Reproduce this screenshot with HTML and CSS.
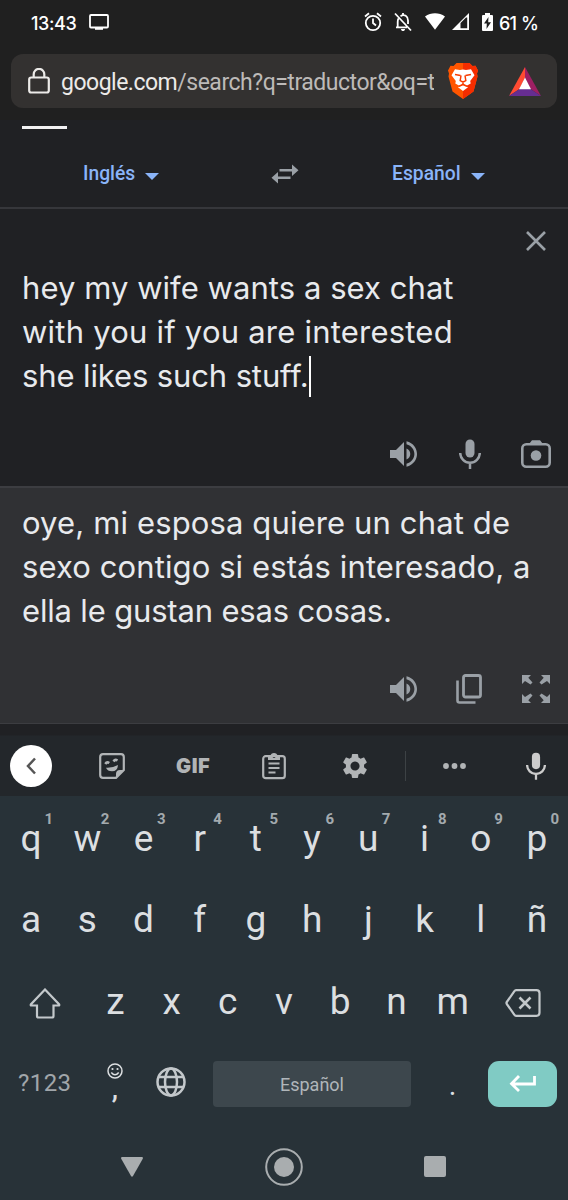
FILE: index.html
```html
<!DOCTYPE html>
<html lang="es">
<head>
    <meta charset="UTF-8">
    <meta name="viewport" content="width=device-width, initial-scale=1.0">
    <title>Traductor</title>
    <link rel="stylesheet" href="styles.css">
</head>
<body>
    <svg class="defs">
        <symbol id="speaker" viewBox="0 0 28 26">
            <path d="M0 9h6l8-8v24l-8-8H0z"/>
            <path d="M16.500 7.500c5 2 5 9 0 11z"/>
            <path d="M16.500 0.300v3c10.500 3 10.500 16.400 0 19.400v3c14-3.500 14-21.900 0-25.400z"/>
        </symbol>
        <symbol id="mic" viewBox="0 0 22 30">
            <rect x="6.500" y="0.500" width="9" height="18" rx="4.500"/>
            <path d="M1.200 14a9.800 9.800 0 0 0 19.600 0M11 23.500V30" fill="none" stroke="currentColor" stroke-width="2.500"/>
        </symbol>
    </svg>
    <div class="phone">
        <div class="status">
            <span class="time">13:43</span>
            <svg class="cast" width="20" height="17" viewBox="0 0 20 17"><rect x="1" y="1" width="18" height="12.500" rx="1" fill="none" stroke="currentColor" stroke-width="1.800"/><path d="M6 13h8v2.800H6z"/></svg>
            <div class="status-icons">
                <svg width="18" height="20" viewBox="0 0 18 20"><g fill="none" stroke="currentColor" stroke-width="1.800"><circle cx="9" cy="11" r="7.200"/><path d="M9 6.500V11l3 2.500M1 4.500L5 1.300M17 4.500L13 1.300"/></g></svg>
                <svg width="18" height="20" viewBox="0 0 18 20"><path d="M1 1.500l16 17M4.500 6.500c-.7 1-.8 2-.8 3.500v5M2 15.400h11M6.500 4.200c4-2.600 7.500.2 7.500 4.300v3.500M9 1v2.500" fill="none" stroke="currentColor" stroke-width="1.800"/><path d="M7 17h4c0 2.700-4 2.700-4 0z"/></svg>
                <svg width="20" height="20" viewBox="0 0 20 20"><path d="M0 4.500C6 .2 14 .2 20 4.500L10 17.800z"/></svg>
                <svg width="18" height="20" viewBox="0 0 18 20"><path fill-rule="evenodd" d="M0 18L17 1v17zM8.500 16.200h6.700V5.500H14L8.500 11z"/></svg>
                <svg width="11" height="20" viewBox="0 0 11 20"><path fill-rule="evenodd" d="M3 1h5v2h2q1 0 1 1v14q0 1-1 1H1q-1 0-1-1V4q0-1 1-1h2zM6.500 5L2 11.500h2.800L4.500 17 9 10.300H6.200z"/></svg>
                <span class="battery">61 %</span>
            </div>
        </div>

        <div class="browser">
            <div class="address">
                <svg class="lock" width="22" height="26" viewBox="0 0 22 26"><rect x="1.200" y="9.500" width="19.600" height="15" rx="2" fill="none" stroke="currentColor" stroke-width="2.200"/><path d="M5.700 9.500V6.200a5.300 5.300 0 0 1 10.600 0v3.300" fill="none" stroke="currentColor" stroke-width="2.200"/></svg>
                <div class="url">google.com<span>/search?q=traductor&amp;oq=t</span></div>
                <svg class="brave" width="30" height="36" viewBox="0 0 30 36">
                    <path fill="#ff5500" d="M8.500 0h13l3 3 3-.2 2.500 4.700-1 3 .5 3-4 15L15 36 4.500 28.500.5 13.500l.5-3-1-3 2.500-4.700 3 .2z"/>
                    <path fill="#f52d00" d="M15 0h6.500l3 3 3-.2 2.500 4.700-1 3 .5 3-4 15L15 36z"/>
                    <path fill="#fff" d="M7 6.300l5 .8 3-.6 3 .6 5-.8 3.500 6-4.300 5.700.5 2.500-4.500 2.500-3.200-2.600-3.200 2.600-4.500-2.500.5-2.500-4.300-5.700z"/>
                    <path fill="#fff" d="M10 24.300l5-2.500 5 2.500-5 3.700z"/>
                    <path d="M7 11.500l5.500 1M23 11.500l-5.500 1M13 12.500l-.8 5 2.800 1.700 2.800-1.700-.8-5M15 19v2.500l-4 1.700M15 21.500l4 1.700" fill="none" stroke="#f83b00" stroke-width="1.500"/>
                </svg>
                <svg class="bat" width="32" height="29" viewBox="0 0 32 29"><path fill="#ff4b32" d="M16 0v11L10.500 22 0 29z"/><path fill="#9e1f63" d="M16 0l16 29-10.500-7L16 11z"/><path fill="#662d91" d="M0 29l10.500-7h11L32 29z"/><path fill="#fff" d="M16 10.500L22 22.300H10z"/></svg>
            </div>
        </div>

        <div class="tab-line"></div>
        <div class="languages">
            <div class="lang">Inglés<i></i></div>
            <svg class="swap" width="28" height="22" viewBox="0 0 28 22"><path d="M8.500 6h12.500V1.500l6.500 5.700L21 13V8.500H8.500zM19.500 16H7v4.500L.5 14.800 7 9v4.500h12.500z"/></svg>
            <div class="lang">Español<i></i></div>
        </div>

        <div class="source">
            <svg class="close" width="20" height="20" viewBox="0 0 20 20"><path d="M1 1l18 18M19 1L1 19" stroke="currentColor" stroke-width="2.600"/></svg>
            <div class="text">
                <p class="s1">hey my wife wants a sex chat</p>
                <p class="s2">with you if you are interested</p>
                <p class="s3">she likes such stuff.<b class="caret"></b></p>
            </div>
            <div class="actions">
                <svg width="28" height="26"><use href="#speaker"/></svg>
                <svg width="22" height="30"><use href="#mic"/></svg>
                <svg width="30" height="28" viewBox="0 0 30 28"><rect x="1.300" y="4.300" width="27.400" height="22.400" rx="4" fill="none" stroke="currentColor" stroke-width="2.600"/><path d="M8 4l3-3.700h8L22 4z"/><circle cx="15" cy="15.500" r="5.300"/></svg>
            </div>
        </div>

        <div class="result">
            <div class="text">
                <p class="r1">oye, mi esposa quiere un chat de</p>
                <p class="r2">sexo contigo si estás interesado, a</p>
                <p class="r3">ella le gustan esas cosas.</p>
            </div>
            <div class="actions">
                <svg width="28" height="26"><use href="#speaker"/></svg>
                <svg width="26" height="30" viewBox="0 0 26 30"><rect x="7.500" y="1.500" width="17" height="21.500" rx="2" fill="none" stroke="currentColor" stroke-width="2.800"/><path d="M1.500 6.500v20q0 2 2 2H19.500" fill="none" stroke="currentColor" stroke-width="2.600"/></svg>
                <svg width="28" height="28" viewBox="0 0 28 28"><path d="M0 0h9L6.300 2.700l4.200 4.800-2 2L3 6 0 9zM28 0v9l-3-3-5.500 3.500-2-2 4.200-4.800L19 0zM0 28v-9l3 3 5.500-3.500 2 2-4.200 4.800L9 28zM28 28h-9l2.700-2.700-4.200-4.800 2-2L25 22l3-3z"/></svg>
            </div>
        </div>

        <div class="toolbar">
            <span class="back"><svg width="10" height="18" viewBox="0 0 10 18"><path d="M9 1.500L2 9l7 7.500" fill="none" stroke="currentColor" stroke-width="2.500"/></svg></span>
            <svg class="sticker" width="26" height="26" viewBox="0 0 26 26"><path d="M4 1.200h18q2.800 0 2.800 2.800v13L17 24.800H4q-2.800 0-2.800-2.800V4q0-2.800 2.800-2.800z" fill="none" stroke="currentColor" stroke-width="2.200"/><path d="M17 25v-4q0-4 4-4h4zM7 14.800q6 .5 12-2.800-.5 6.300-6 6.300-4.500 0-6-3.500z"/><path d="M6.300 11q1.500-2.500 4-1M14.500 8.500q1.500-2.500 4-1" fill="none" stroke="currentColor" stroke-width="2.500"/></svg>
            <span class="gif">GIF</span>
            <svg class="clip" width="24" height="28" viewBox="0 0 24 28"><rect x="1.200" y="4.200" width="21.600" height="22" rx="2.500" fill="none" stroke="currentColor" stroke-width="2.200"/><path d="M6.500 11.500h11M6.500 16h11M6.500 20.500h7" stroke="currentColor" stroke-width="2"/><path fill-rule="evenodd" d="M6 8V4h2.300a3.800 3.800 0 0 1 7.400 0H18v4zM12 3.300a1.400 1.400 0 1 0 .1 0z"/></svg>
            <svg class="gear" width="26" height="26" viewBox="1.700 1.700 20.600 20.600"><path d="M19.140 12.940c.04-.3.060-.61.060-.94 0-.32-.02-.64-.07-.94l2.030-1.580c.18-.14.230-.41.120-.61l-1.920-3.320c-.12-.22-.37-.29-.59-.22l-2.390.96c-.5-.38-1.030-.7-1.620-.94l-.36-2.540c-.04-.24-.24-.41-.48-.41h-3.840c-.24 0-.43.17-.47.41l-.36 2.540c-.59.24-1.130.57-1.620.94l-2.390-.96c-.22-.08-.47 0-.59.22L2.740 8.870c-.12.210-.08.470.12.610l2.030 1.580c-.05.3-.09.630-.09.940s.02.640.07.940l-2.030 1.580c-.18.140-.23.410-.12.610l1.920 3.320c.12.220.37.290.59.220l2.390-.96c.5.380 1.030.7 1.620.94l.36 2.540c.05.240.24.410.48.410h3.840c.24 0 .44-.17.470-.41l.36-2.540c.59-.24 1.130-.56 1.620-.94l2.390.96c.22.080.47 0 .59-.22l1.920-3.320c.12-.22.070-.47-.12-.61l-2.010-1.580zM12 15.600c-1.980 0-3.600-1.620-3.600-3.600s1.620-3.600 3.600-3.600 3.600 1.620 3.600 3.600-1.620 3.600-3.600 3.600z"/></svg>
            <span class="divider"></span>
            <svg class="dots" width="24" height="6" viewBox="0 0 24 6"><circle cx="3" cy="3" r="2.900"/><circle cx="11.500" cy="3" r="2.900"/><circle cx="20" cy="3" r="2.900"/></svg>
            <svg class="voice" width="20" height="28"><use href="#mic"/></svg>
        </div>

        <div class="keyboard">
            <div class="keys">
                <span>q<sup>1</sup></span><span>w<sup>2</sup></span><span>e<sup>3</sup></span><span>r<sup>4</sup></span><span>t<sup>5</sup></span><span>y<sup>6</sup></span><span>u<sup>7</sup></span><span>i<sup>8</sup></span><span>o<sup>9</sup></span><span>p<sup>0</sup></span>
            </div>
            <div class="keys">
                <span>a</span><span>s</span><span>d</span><span>f</span><span>g</span><span>h</span><span>j</span><span>k</span><span>l</span><span>ñ</span>
            </div>
            <div class="keys last">
                <span class="wide"><svg width="32" height="31" viewBox="0 0 32 31"><path d="M16 1.500L30 16.200q.8 1.300-.6 1.300H24.500V28q0 1.500-1.500 1.500H9.500Q8 29.500 8 28V17.500H2.600Q1.200 17.500 2 16.200z" fill="none" stroke="currentColor" stroke-width="2.200"/></svg></span>
                <span>z</span><span>x</span><span>c</span><span>v</span><span>b</span><span>n</span><span>m</span>
                <span class="wide"><svg width="36" height="28" viewBox="0 0 36 28"><path d="M11 1.200h20.500q3 0 3 3v19.600q0 3-3 3H11q-1 0-1.600-1L1.800 15q-.7-1 0-2L9.400 2.200q.6-1 1.600-1z" fill="none" stroke="currentColor" stroke-width="2.200"/><path d="M14.500 8.500l11 11M25.500 8.500l-11 11" stroke="currentColor" stroke-width="2.600"/></svg></span>
            </div>
            <div class="bottom-row">
                <span class="symbols">?123</span>
                <span class="comma"><svg width="16" height="16" viewBox="0 0 16 16"><circle cx="8" cy="8" r="7" fill="none" stroke="currentColor" stroke-width="1.500"/><circle cx="5.500" cy="6" r="1.100"/><circle cx="10.500" cy="6" r="1.100"/><path d="M4.300 9.500q3.700 4.500 7.400 0" fill="none" stroke="currentColor" stroke-width="1.500"/></svg><em>,</em></span>
                <svg class="globe" width="30" height="30" viewBox="0 0 30 30"><g fill="none" stroke="currentColor" stroke-width="2.500"><circle cx="15" cy="15" r="13.500"/><ellipse cx="15" cy="15" rx="6" ry="13.500"/><path d="M3 10h24M3 20h24"/></g></svg>
                <span class="space">Español</span>
                <span class="period">.</span>
                <span class="enter"><svg width="27" height="17" viewBox="0 0 27 17"><path d="M25.500 1v8H3M10 1L2.500 8.800 10 16" fill="none" stroke="currentColor" stroke-width="2.800"/></svg></span>
            </div>
            <div class="nav">
                <svg width="24" height="22" viewBox="0 0 24 22"><path d="M2 1h20q1.500.2.800 1.700L13 20q-1 1.500-2 0L1.200 2.700Q.5 1.200 2 1z"/></svg>
                <svg width="38" height="38" viewBox="0 0 38 38"><circle cx="19" cy="19" r="17.800" fill="none" stroke="currentColor" stroke-width="2"/><circle cx="19" cy="19" r="10"/></svg>
                <i></i>
            </div>
        </div>
    </div>
</body>
</html>
```

FILE: styles.css
```css
* {
    box-sizing: border-box;
}
body {
    margin: 0;
    background: #202124;
    font-family: Roboto, "Liberation Sans", sans-serif;
}
p {
    margin: 0;
}
svg {
    display: block;
    flex: none;
    fill: currentColor;
}
.defs {
    display: none;
}
.phone {
    width: 568px;
    height: 1200px;
    overflow: hidden;
    display: flex;
    flex-direction: column;
}

/* status bar */
.status {
    height: 54px;
    padding: 0 31px 9px 31px;
    display: flex;
    align-items: center;
    background: #202020;
    color: #fff;
    font-family: Inter, sans-serif;
    font-weight: 500;
    font-size: 18px;
}
.time {
    width: 58px;
    padding-top: 2px;
    letter-spacing: -0.4px;
}
.cast {
    margin-top: -1px;
}
.status-icons {
    margin-left: auto;
    display: flex;
    align-items: center;
}
.status-icons svg {
    margin: -2px 12px 0 0;
}
.status-icons svg:nth-child(2) {
    margin-right: 13px;
}
.status-icons svg:nth-child(3) {
    margin-right: 7px;
}
.status-icons svg:nth-child(5) {
    margin-right: 6px;
}
.battery {
    width: 38px;
    padding-top: 2px;
    white-space: nowrap;
    letter-spacing: -0.9px;
    word-spacing: 1px;
}

/* address bar */
.browser {
    height: 66px;
    padding: 0 11px;
    background: #202020;
}
.address {
    height: 54px;
    padding: 0 16px 0 17px;
    display: flex;
    align-items: center;
    border-radius: 12px;
    background: #333130;
    color: #eceae8;
}
.lock {
    margin-right: 11px;
}
.url {
    width: 373px;
    overflow: hidden;
    white-space: nowrap;
    font-size: 23px;
    letter-spacing: -0.5px;
    line-height: 34px;
    padding-top: 4px;
}
.url span {
    color: #bdbab8;
    letter-spacing: -0.48px;
}
.brave {
    margin-left: 14px;
}
.bat {
    margin-left: auto;
}

/* language picker */
.tab-line {
    width: 45px;
    height: 3px;
    margin: 6px 0 0 22px;
    background: #f1f1f3;
}
.languages {
    height: 80px;
    padding: 11px 83px 0;
    display: flex;
    align-items: center;
    border-bottom: 2px solid #36373b;
    color: #9aa0a6;
}
.swap {
    margin: 0 auto 0 112px;
}
.lang {
    width: 93px;
    display: flex;
    align-items: center;
    justify-content: space-between;
    flex: none;
    color: #8ab4f8;
    font-size: 19.3px;
    font-weight: 500;
}
.lang:first-child {
    width: 76px;
}
.lang i {
    margin-top: 5px;
    border: 7px solid transparent;
    border-top-color: #8ab4f8;
    border-bottom: 0;
}

/* translation */
.text {
    color: #e8eaed;
    font-family: Inter, sans-serif;
    font-size: 31px;
    line-height: 44px;
    white-space: nowrap;
}
.s1 {
    letter-spacing: 0.05px;
}
.s2 {
    letter-spacing: 0.22px;
}
.s3 {
    letter-spacing: -0.12px;
}
.r1 {
    letter-spacing: 0.13px;
}
.r2 {
    letter-spacing: 0.1px;
}
.r3 {
    letter-spacing: -0.17px;
}
.source {
    height: 277px;
    padding: 22px 17px 17px 22px;
    display: flex;
    flex-direction: column;
}
.close {
    align-self: flex-end;
    margin: 0 5px 15px 0;
    color: #9aa0a6;
}
.source .text {
    flex: 1;
}
.caret {
    display: inline-block;
    width: 2px;
    height: 41px;
    vertical-align: 2px;
    margin: -12px 0 -12px;
    background: #fff;
}
.actions {
    height: 30px;
    display: flex;
    align-items: center;
    justify-content: flex-end;
    gap: 40px;
    color: #9aa0a6;
}
.source .actions svg:first-child {
    margin-right: 1px;
}
.result {
    height: 238px;
    padding: 13px 18px 19px 22px;
    display: flex;
    flex-direction: column;
    border-top: 2px solid #3c3d41;
    border-bottom: 1px solid #3c3d41;
    background: #303134;
}
.result .text {
    flex: 1;
}
.result .actions {
    gap: 40px;
}
.result .actions svg:first-child {
    margin-right: -2px;
}

/* keyboard toolbar */
.toolbar {
    height: 72px;
    margin-top: auto;
    padding: 11px 22px 0 10px;
    display: flex;
    align-items: center;
    background: linear-gradient(#202124 11px, #23272b 12px);
    color: #b1b4b6;
}
.back {
    width: 42px;
    height: 42px;
    display: flex;
    align-items: center;
    justify-content: center;
    border-radius: 50%;
    background: #fff;
    color: #555;
}
.sticker {
    margin-left: 47px;
}
.gif {
    width: 34px;
    margin-left: 51px;
    font-family: Inter, sans-serif;
    font-size: 20px;
    font-weight: 900;
    letter-spacing: 0.6px;
}
.clip {
    margin-left: 52px;
}
.gear {
    margin-left: 56px;
}
.divider {
    width: 1px;
    height: 30px;
    margin-left: 37px;
    background: #3d4245;
}
.dots {
    margin-left: 37px;
}
.voice {
    margin-left: auto;
    color: #ccc;
}

/* keyboard */
.keyboard {
    height: 404px;
    display: flex;
    flex-direction: column;
    background: #283238;
    color: #dcdfe1;
}
.keys {
    height: 81px;
    padding: 4px 3px 0;
    display: flex;
    align-items: center;
    font-size: 37px;
}
.keys.last {
    padding-top: 5px;
}
.keys span {
    flex: 1;
    position: relative;
    display: flex;
    justify-content: center;
}
.keys .wide {
    flex: 1.5;
    padding-top: 4px;
    color: #c3c8cb;
}
.keys sup {
    position: absolute;
    top: -7px;
    right: 6px;
    line-height: 18px;
    font-size: 15px;
    font-weight: 700;
    color: #a3aaae;
}
.bottom-row {
    height: 84px;
    padding: 5px 11px 0 18px;
    display: flex;
    align-items: center;
}
.symbols {
    width: 89px;
    padding-bottom: 2px;
    font-size: 24px;
    letter-spacing: 0.4px;
    color: #a0a6aa;
}
.comma {
    width: 16px;
    display: flex;
    flex-direction: column;
    align-items: center;
}
.comma em {
    margin-top: -5px;
    font-style: normal;
    font-weight: 500;
    font-size: 28px;
    line-height: 30px;
}
.globe {
    margin: -4px 0 0 33px;
    color: #c3c8cb;
}
.space {
    width: 198px;
    height: 46px;
    margin-left: 27px;
    padding-top: 1px;
    display: flex;
    align-items: center;
    justify-content: center;
    border-radius: 4px;
    background: #3d474d;
    color: #b0b6ba;
    font-size: 18px;
}
.period {
    width: 77px;
    padding: 3px 0 0 6px;
    text-align: center;
    font-size: 29px;
}
.enter {
    width: 69px;
    height: 46px;
    display: flex;
    align-items: center;
    justify-content: center;
    border-radius: 11px;
    background: #80cbc4;
    color: #fff;
}
.nav {
    flex: 1;
    padding: 10px 122px 0 120px;
    display: flex;
    align-items: center;
    justify-content: space-between;
    color: #a9adaf;
}
.nav i {
    width: 22px;
    height: 21px;
    border-radius: 2px;
    background: #a9adaf;
}
```
